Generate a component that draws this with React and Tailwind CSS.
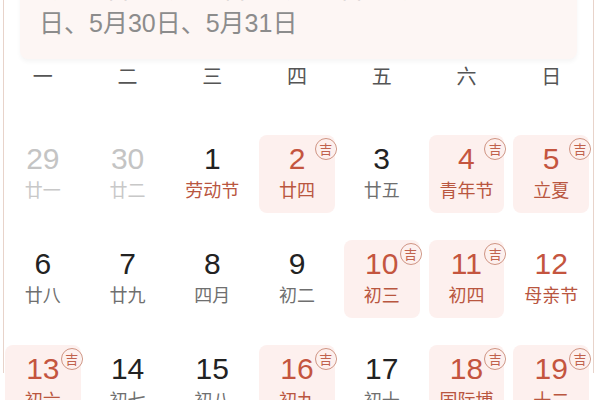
import React from 'react';

const weekdays = ['一', '二', '三', '四', '五', '六', '日'];

// day: number, lunar: label, dim: other month, ji: lucky day, red: holiday text
const weeks = [
  [
    { day: 29, lunar: '廿一', dim: true },
    { day: 30, lunar: '廿二', dim: true },
    { day: 1, lunar: '劳动节', redLunar: true },
    { day: 2, lunar: '廿四', ji: true },
    { day: 3, lunar: '廿五' },
    { day: 4, lunar: '青年节', ji: true },
    { day: 5, lunar: '立夏', ji: true },
  ],
  [
    { day: 6, lunar: '廿八' },
    { day: 7, lunar: '廿九' },
    { day: 8, lunar: '四月' },
    { day: 9, lunar: '初二' },
    { day: 10, lunar: '初三', ji: true },
    { day: 11, lunar: '初四', ji: true },
    { day: 12, lunar: '母亲节', red: true },
  ],
  [
    { day: 13, lunar: '初六', ji: true },
    { day: 14, lunar: '初七' },
    { day: 15, lunar: '初八' },
    { day: 16, lunar: '初九', ji: true },
    { day: 17, lunar: '初十' },
    { day: 18, lunar: '国际博', ji: true },
    { day: 19, lunar: '十二', ji: true },
  ],
];

const DayCell = ({ cell }) => {
  const isRed = cell.ji || cell.red;
  const numColor = cell.dim ? 'text-[#c4c4c4]' : isRed ? 'text-[#c4553f]' : 'text-[#222222]';
  const lunarColor = cell.dim
    ? 'text-[#c8c8c8]'
    : isRed || cell.redLunar
    ? 'text-[#b9563f]'
    : 'text-[#6f6f6f]';

  return (
    <div
      className={`relative h-[78px] rounded-lg flex flex-col items-center pt-[8px] ${
        cell.ji ? 'bg-[#fdf0ee]' : ''
      }`}
    >
      <span className={`text-[30px] leading-[32px] ${numColor}`}>{cell.day}</span>
      <span className={`mt-[5px] text-[18px] leading-[22px] whitespace-nowrap ${lunarColor}`}>
        {cell.lunar}
      </span>
      {cell.ji && (
        <span className="absolute top-[3px] right-[-2px] w-[22px] h-[22px] rounded-full border border-[#cf9483] flex items-center justify-center text-[13px] leading-none text-[#c0624d]">
          吉
        </span>
      )}
    </div>
  );
};

export default function App() {
  return (
    <div
      className="w-[600px] h-[400px] overflow-hidden bg-white"
      style={{ fontFamily: '"Liberation Sans", "Noto Sans CJK SC", sans-serif' }}
    >
      <div className="ml-[3px] w-[591px] h-full border-x border-[#e8d3ca]">
        {/* lucky days note, scrolled so only its last line shows */}
        <div className="mx-4 -mt-[27px] bg-[#fdf6f4] rounded-b-lg pl-[19px] pr-4 pb-[19px] shadow-[0_3px_4px_rgba(0,0,0,0.04)] text-[25px] leading-[33px] text-[#8c8c8c]">
          <div className="whitespace-nowrap overflow-hidden">5月18日、5月19日、5月23日、5月2</div>
          <div className="mt-[1px]">日、5月30日、5月31日</div>
        </div>

        <div className="ml-[1px] mr-[4px]">
          <div className="grid grid-cols-7 gap-x-[9px] mt-[4px] h-[28px] items-center text-[20px] leading-[28px] text-[#555555]">
            {weekdays.map((w) => (
              <div key={w} className="text-center">
                {w}
              </div>
            ))}
          </div>

          <div className="grid grid-cols-7 gap-x-[9px] gap-y-[27px] mt-[44px]">
            {weeks.flat().map((cell, i) => (
              <DayCell key={i} cell={cell} />
            ))}
          </div>
        </div>
      </div>
    </div>
  );
}
